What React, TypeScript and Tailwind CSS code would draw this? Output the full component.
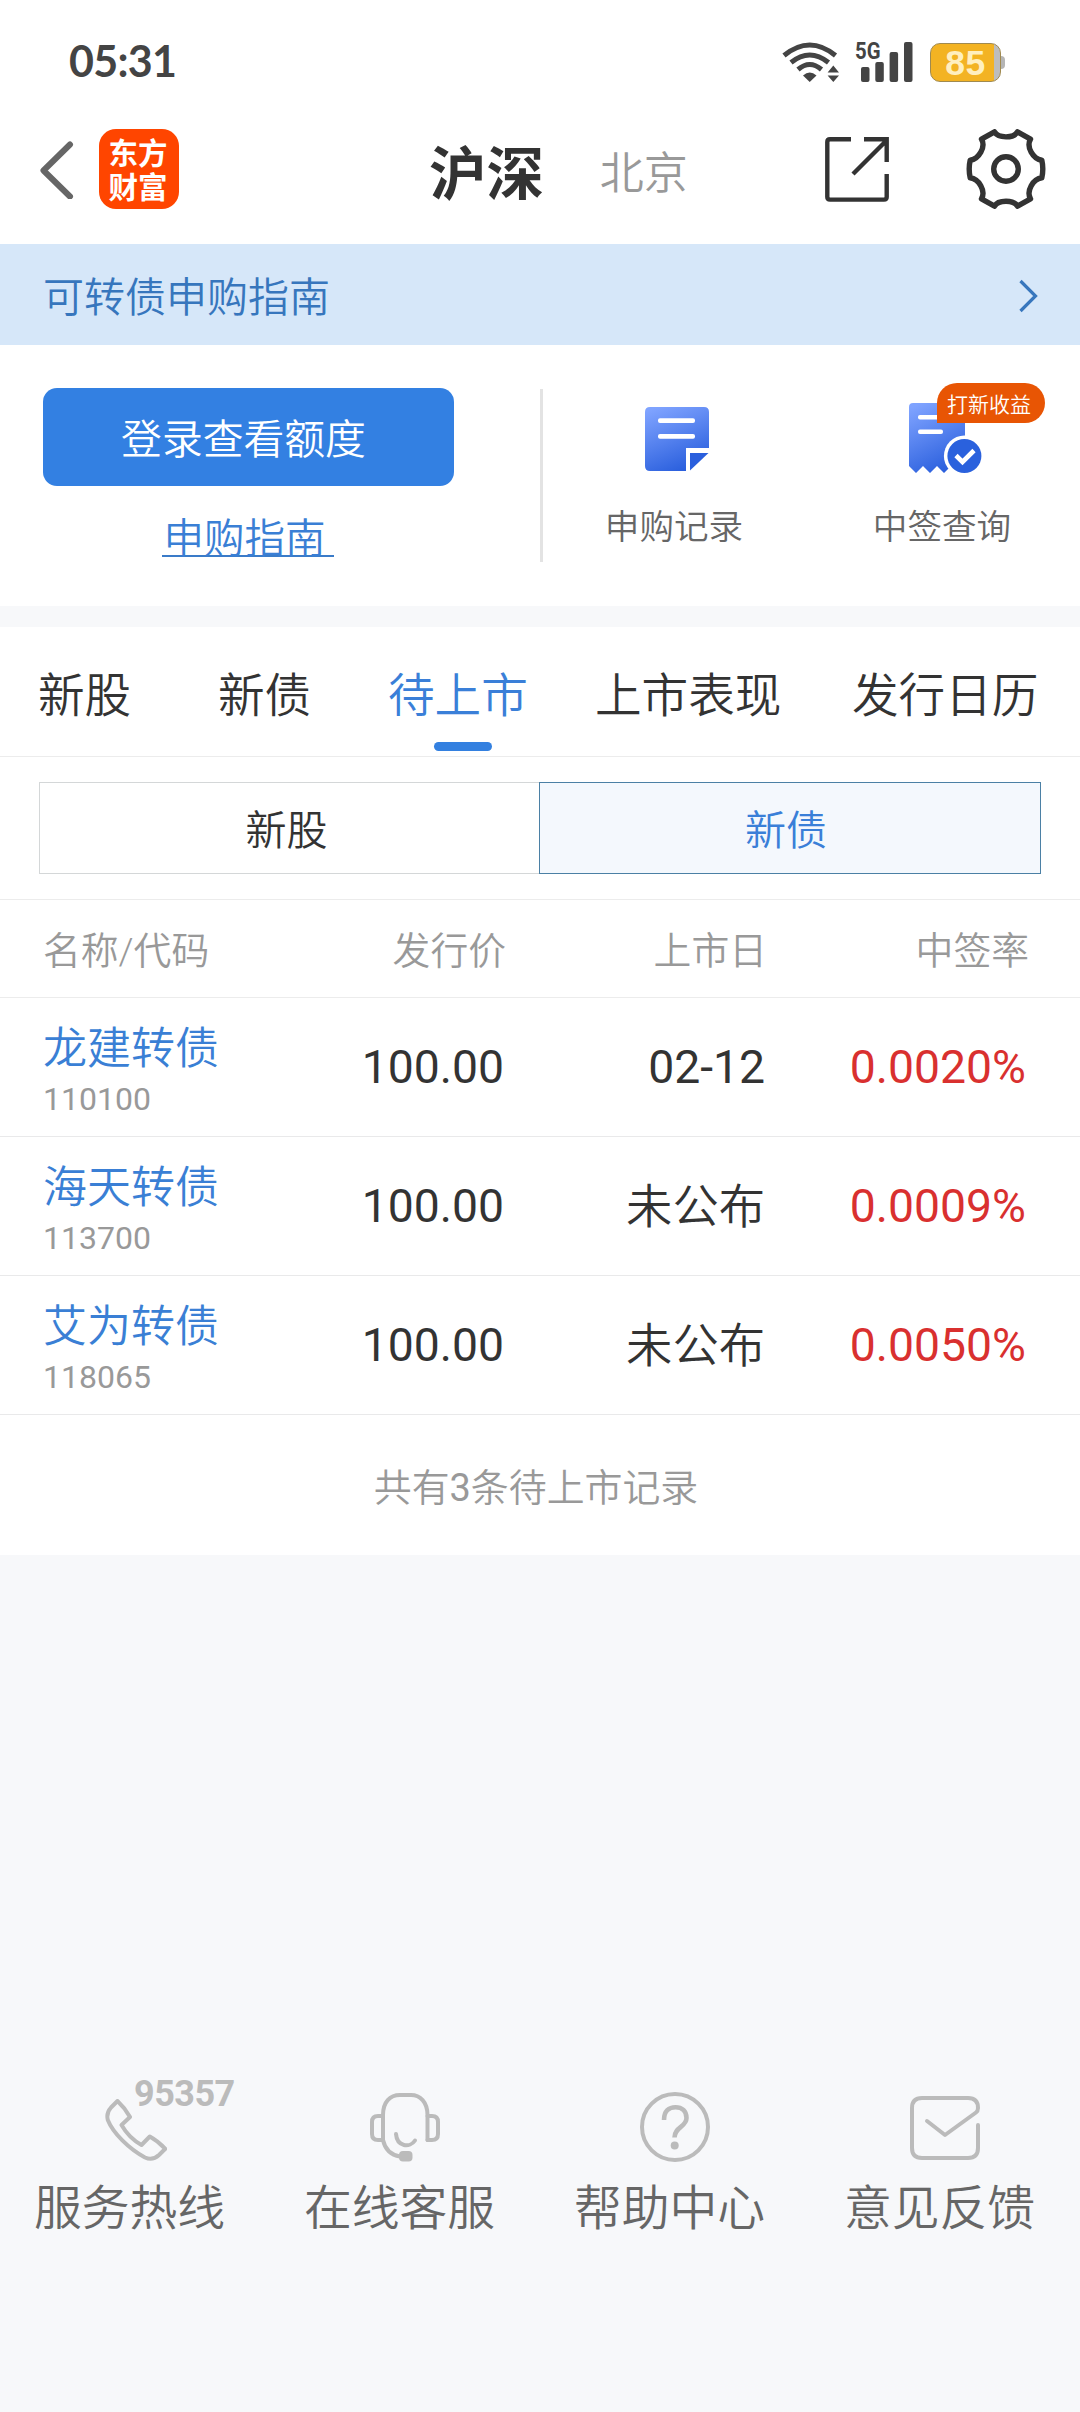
import clsx from 'clsx'
import type { ReactNode } from 'react'

type Bond = {
  name: string
  code: string
  price: string
  date: string
  rate: string
}

const bonds: Bond[] = [
  { name: '龙建转债', code: '110100', price: '100.00', date: '02-12', rate: '0.0020%' },
  { name: '海天转债', code: '113700', price: '100.00', date: '未公布', rate: '0.0009%' },
  { name: '艾为转债', code: '118065', price: '100.00', date: '未公布', rate: '0.0050%' },
]

const tabs = [
  { label: '新股', width: 'w-[180px]' },
  { label: '新债', width: 'w-[170px]' },
  { label: '待上市', width: 'w-[207px]' },
  { label: '上市表现', width: 'w-[257px]' },
  { label: '发行日历', width: 'w-[190px]' },
]

function StatusBar() {
  return (
    <div className="flex h-[122px] shrink-0 items-start justify-between pr-[75px] pl-[69px]">
      <span className="mt-[34px] font-['Lato'] text-[43px] leading-[54px] font-bold tracking-[-0.7px] text-[#444]">
        05:31
      </span>
      <div className="mt-[36px] flex items-start">
        <svg className="mt-1.5 mr-4 h-10 w-[57px]" viewBox="0 0 57 40" fill="none" aria-hidden>
          <g stroke="#444" strokeWidth="5">
            <path d="M2 13.5 Q27.7 -7.5 53.5 13.5" />
            <path d="M9 20.5 Q27.7 5.5 46.5 20.5" />
            <path d="M16 27.5 Q27.7 17.5 39.5 27.5" />
          </g>
          <path d="M21 33.5 Q27.7 27.5 34.5 33.5 L27.7 40Z" fill="#444" />
          <path d="M51.3 23.5 L57 30.5 H45.6Z M51.3 40 L57 33.5 H45.6Z" fill="#444" />
        </svg>
        <svg className="mr-[17px] h-[46px] w-[58px]" viewBox="0 -5 58 46" fill="#444" aria-hidden>
          <text
            x="0"
            y="18"
            fontFamily="Roboto, sans-serif"
            fontWeight="700"
            fontSize="24.5"
            textLength="25.5"
            lengthAdjust="spacingAndGlyphs"
          >
            5G
          </text>
          <rect x="6" y="26" width="8.5" height="15" rx="2" />
          <rect x="20.3" y="21" width="8.5" height="20" rx="2" />
          <rect x="34.6" y="11" width="8.5" height="30" rx="2" />
          <rect x="49" y="1" width="8.5" height="40" rx="2" />
        </svg>
        <div className="mt-[7px] flex h-[39px] w-[71px] items-center justify-center rounded-[10px] border border-[#a08a50] bg-[linear-gradient(to_right,#f3b323_63px,#bdbdbd_63px)]">
          <span className="mt-px font-['Liberation_Sans'] text-[35.5px] leading-[37px] font-bold tracking-[0.5px] text-[#ffefbf]">
            85
          </span>
        </div>
        <div className="mt-5 h-[13px] w-1 rounded-r-sm bg-[#b5b5b5]" />
      </div>
    </div>
  )
}

function Header() {
  return (
    <header className="flex h-[122px] shrink-0 items-start">
      <svg className="mt-[19px] ml-[38px] h-[58px] w-9" viewBox="0 0 36 58" fill="none" aria-hidden>
        <path d="M32 3.5 L5.5 29.5 L32 55.5" stroke="#666" strokeWidth="6" strokeLinejoin="round" strokeLinecap="round" />
      </svg>
      <div className="mt-[7px] ml-[25px] flex h-20 w-20 flex-col items-center justify-center rounded-[17px] bg-[#ff4500] pt-[3px] text-[29.5px] leading-[34px] font-bold text-white">
        <span className="-ml-0.5">东方</span>
        <span className="-ml-0.5">财富</span>
      </div>
      <div className="ml-[250px] flex h-[100px] w-[396px] items-center pt-[3px]">
        <h1 className="mt-[5px] text-[57.4px] leading-[80px] font-bold text-[#333]">沪深</h1>
        <span className="ml-14 text-[44px] leading-[60px] font-[350] text-[#999]">北京</span>
      </div>
      <svg className="mt-[15px] h-[65px] w-16" viewBox="0 0 64 65" fill="none" stroke="#333" strokeWidth="4.4" aria-hidden>
        <path d="M26 2.3 H5 Q2.3 2.3 2.3 5 V60 Q2.3 62.6 5 62.6 H59 Q61.7 62.6 61.7 60 V37" />
        <path d="M39 2.3 H61.7 V25 M28 37 L61 4" />
      </svg>
      <svg className="mt-[7px] ml-[76.5px] h-20 w-20" viewBox="0 0 80 80" fill="none" stroke="#333" strokeWidth="5.4" strokeLinejoin="round" aria-hidden>
        <path d="M28.5 2.8 C32 9.5 48 9.5 51.5 2.8 L64.5 10.2 C60 18 67 30 75.8 31.2 Q77.8 40 75.8 48.8 C67 50 60 62 64.5 69.8 L51.5 77.2 C48 70.5 32 70.5 28.5 77.2 L15.5 69.8 C20 62 13 50 4.2 48.8 Q2.2 40 4.2 31.2 C13 30 20 18 15.5 10.2Z" />
        <circle cx="40" cy="40" r="12.3" />
      </svg>
    </header>
  )
}

function GuideBanner() {
  return (
    <div className="flex h-[101px] shrink-0 items-center justify-between bg-[#d6e7f9] pr-[42px] pl-[43px]">
      <span className="mt-[7px] text-[41px] leading-[60px] font-[350] text-[#3776bd]">可转债申购指南</span>
      <svg className="mt-0.5 h-[34px] w-5" viewBox="0 0 20 34" fill="none" aria-hidden>
        <path d="M2.5 2 L17.5 17 L2.5 32" stroke="#3776bd" strokeWidth="3.2" />
      </svg>
    </div>
  )
}

function RecordIcon() {
  return (
    <svg className="h-16 w-16" viewBox="0 0 64 64" aria-hidden>
      <defs>
        <linearGradient id="record" x1="0.2" y1="0" x2="0.6" y2="1">
          <stop offset="0" stopColor="#7fa3ff" />
          <stop offset="1" stopColor="#2a5fdd" />
        </linearGradient>
      </defs>
      <path d="M5 0 H59 Q64 0 64 5 V41 H41 V64 H5 Q0 64 0 59 V5 Q0 0 5 0Z" fill="url(#record)" />
      <path d="M45 46 H63.5 L45 63.5Z" fill="#2a5fdd" />
      <rect x="13" y="11.3" width="37" height="4.8" rx="2" fill="#fff" />
      <rect x="13" y="27" width="37" height="4.8" rx="2" fill="#fff" />
    </svg>
  )
}

function LotteryIcon() {
  return (
    <svg className="h-[71px] w-[73px]" viewBox="0 0 73 71" aria-hidden>
      <defs>
        <linearGradient id="lottery" x1="0.2" y1="0" x2="0.6" y2="1">
          <stop offset="0" stopColor="#7fa3ff" />
          <stop offset="1" stopColor="#2a5fdd" />
        </linearGradient>
      </defs>
      <path d="M4 0 H52 Q56 0 56 4 V64 L42 63 L35 70 L28 63 L21 70 L14 63 L7 70 L0 63 V4 Q0 0 4 0Z" fill="url(#lottery)" />
      <rect x="9" y="12" width="34" height="4.5" rx="2" fill="#fff" />
      <rect x="9" y="26.5" width="25" height="4.5" rx="2" fill="#fff" />
      <circle cx="55.4" cy="53" r="20.5" fill="#fff" />
      <circle cx="55.4" cy="53" r="17" fill="#2a61dd" />
      <path d="M47 52.5 L53.5 59 L65 47.5" fill="none" stroke="#fff" strokeWidth="4.6" />
    </svg>
  )
}

function AccountPanel() {
  return (
    <section className="flex h-[261px] shrink-0 items-start bg-white pl-[43px] font-[350]">
      <div className="mt-[43px] flex w-[411px] flex-col items-center">
        <button
          type="button"
          className="flex h-[98px] w-full items-center justify-center rounded-[14px] bg-[#3380e2] text-[40.8px] leading-[60px] text-white"
        >
          <span className="mt-1.5 -ml-2.5">登录查看额度</span>
        </button>
        <a className="mt-[26px] -ml-0.5 block h-[45px] w-[172px] border-b-2 border-[#3a7bc8] pl-[2px] text-[40.5px] leading-[54px] text-[#3a7fd5]">
          申购指南
        </a>
      </div>
      <div className="mt-11 ml-[86px] h-[173px] w-[3px] bg-[#e3e3e3]" />
      <div className="flex w-[268px] flex-col items-center pt-[62px]">
        <RecordIcon />
        <span className="mt-[31px] mr-[6px] text-[34.6px] leading-[50px] text-[#666]">申购记录</span>
      </div>
      <div className="relative flex w-[268px] flex-col items-center pt-[58px]">
        <LotteryIcon />
        <span className="mt-7 mr-[6px] text-[34.6px] leading-[50px] text-[#666]">中签查询</span>
        <span className="absolute top-[38px] left-[126px] flex h-10 w-[108px] items-center justify-center rounded-[20px] rounded-bl-none bg-[#e85504] pt-1 pr-1 text-[21px] leading-[30px] text-white">
          打新收益
        </span>
      </div>
    </section>
  )
}

function Tabs() {
  return (
    <nav className="flex h-[130px] shrink-0 border-b border-[#ececec] bg-white pl-[38px]">
      {tabs.map(({ label, width }) => {
        const active = label === '待上市'
        return (
          <div
            key={label}
            className={clsx(
              'flex shrink-0 flex-col items-start pt-[34px] text-[46.6px] leading-[70px] font-[350] whitespace-nowrap',
              width,
              active ? 'text-[#3a7fd8]' : 'text-[#333]',
            )}
          >
            <span>{label}</span>
            {active ? <span className="mt-[11px] ml-[46px] h-[9px] w-[58px] rounded-full bg-[#3380e0]" /> : null}
          </div>
        )
      })}
    </nav>
  )
}

function Segments() {
  return (
    <div className="flex h-[143px] shrink-0 border-b border-[#ececec] bg-white px-[39px] pt-[25px] font-[350]">
      <div className="flex h-[92px] w-[500px] items-center justify-center border border-r-0 border-[#d4d7d8] text-[41px] text-[#333]">
        <span className="mt-[5px] mr-[6px] leading-[60px]">新股</span>
      </div>
      <div className="flex h-[92px] w-[502px] items-center justify-center border border-[#4b80a5] bg-[#f4f8fd] text-[41px] text-[#3a7fd8]">
        <span className="mt-[5px] mr-2 leading-[60px]">新债</span>
      </div>
    </div>
  )
}

function BondTable() {
  return (
    <section className="shrink-0 bg-white">
      <div className="grid h-[98px] grid-cols-[250px_256px_261px_262px] items-center border-b border-[#ececec] pt-1 text-[37.8px] leading-[50px] font-[350] text-[#999]">
        <span className="pl-[43px] whitespace-nowrap">名称/代码</span>
        <span className="text-right">发行价</span>
        <span className="text-right">上市日</span>
        <span className="text-right">中签率</span>
      </div>
      {bonds.map((bond) => (
        <div
          key={bond.code}
          className="grid h-[139px] grid-cols-[250px_254px_261px_261px] items-center border-b border-[#e9e9ea] text-[46.3px] leading-[60px] text-[#333]"
        >
          <div className="flex flex-col pt-1 pl-[43px]">
            <span className="text-[44px] leading-[60px] font-[350] text-[#3a7fd5]">{bond.name}</span>
            <span className="text-[32px] leading-[41px] text-[#999]">{bond.code}</span>
          </div>
          <span className="text-right">{bond.price}</span>
          <span className={clsx('text-right', bond.date === '未公布' && 'pt-0.5 font-[350]')}>{bond.date}</span>
          <span className="text-right text-[#d9302f]">{bond.rate}</span>
        </div>
      ))}
      <p className="h-[140px] pt-[48px] pr-2 text-center text-[37.9px] leading-[50px] font-[350] text-[#999]">
        共有<span className="font-normal">{bonds.length}</span>条待上市记录
      </p>
    </section>
  )
}

function FooterItem({ label, children }: { label: string; children: ReactNode }) {
  return (
    <div className="flex w-[270px] flex-col items-center">
      <div className="relative flex h-[70px] w-[70px] items-end justify-center">{children}</div>
      <span className="mt-[12px] mr-[11px] text-[47.8px] leading-[70px] font-[350] text-[#666]">{label}</span>
    </div>
  )
}

function Footer() {
  return (
    <footer className="mt-auto flex h-[320px] shrink-0 text-[#bbb]">
      <FooterItem label="服务热线">
        <svg className="mb-px ml-0.5 h-[62px] w-[62px]" viewBox="0 0 62 62" fill="none" stroke="currentColor" strokeWidth="4" strokeLinejoin="round" aria-hidden>
          <path d="M12.5 2 Q20 9 25 18 L16.5 26 Q24 39 36.5 46 L44.8 37.5 Q53 42 60.3 49.8 L54 56 Q47.5 62 40 58.5 C24 50 8 34 2.8 21 Q1 14 6 8.5Z" />
        </svg>
        <span className="absolute -top-[15px] left-[34px] font-['Roboto'] text-[36px] leading-[34px] font-bold tracking-[-0.5px]">
          95357
        </span>
      </FooterItem>
      <FooterItem label="在线客服">
        <svg className="h-[70px] w-[70px]" viewBox="0 0 70 70" fill="none" stroke="currentColor" strokeWidth="4" strokeLinecap="round" aria-hidden>
          <path d="M13 48 V23 C13 10 20 3 30 3 H41 C50 3 57.5 10 57.5 23 V48" />
          <path d="M13 24 H8 Q2 24 2 30 V42 Q2 48 8 48 H13" />
          <path d="M57.5 24 H62 Q68 24 68 30 V42 Q68 48 62 48 H57.5" />
          <path d="M13 48 Q16 62 30 64.5" />
          <path d="M26 42 C27 55 40 56 45 48.5" />
          <rect x="29" y="59" width="13.5" height="10.5" rx="4" fill="currentColor" stroke="none" />
        </svg>
      </FooterItem>
      <FooterItem label="帮助中心">
        <svg className="h-[70px] w-[70px]" viewBox="0 0 70 70" fill="none" stroke="currentColor" strokeWidth="4" aria-hidden>
          <circle cx="35" cy="35" r="33" />
          <path d="M24 28 C24 19 29 15.2 35.5 15.2 C42 15.2 46.5 19 46.5 26 C46.5 35 34.5 35 34.5 45.5" strokeWidth="4.6" />
          <circle cx="34.7" cy="53.5" r="4" fill="currentColor" stroke="none" />
        </svg>
      </FooterItem>
      <FooterItem label="意见反馈">
        <svg className="mb-px h-[65px] w-[70px]" viewBox="0 0 70 65" fill="none" stroke="currentColor" strokeWidth="4" strokeLinecap="round" strokeLinejoin="round" aria-hidden>
          <path d="M68 29 V52 Q68 62 58 62 H12 Q2 62 2 52 V12 Q2 2 12 2 H58 Q68 2 68 12 Q68 15 66 16.5 L35 39 L17 25" />
        </svg>
      </FooterItem>
    </footer>
  )
}

export default function App() {
  return (
    <div className="flex h-[2412px] w-[1080px] flex-col overflow-hidden bg-[#f7f8fa] font-['Roboto','Noto_Sans_CJK_SC',sans-serif]">
      <div className="shrink-0 bg-white">
        <StatusBar />
        <Header />
      </div>
      <GuideBanner />
      <AccountPanel />
      <div className="h-[21px] shrink-0" />
      <Tabs />
      <Segments />
      <BondTable />
      <Footer />
    </div>
  )
}
